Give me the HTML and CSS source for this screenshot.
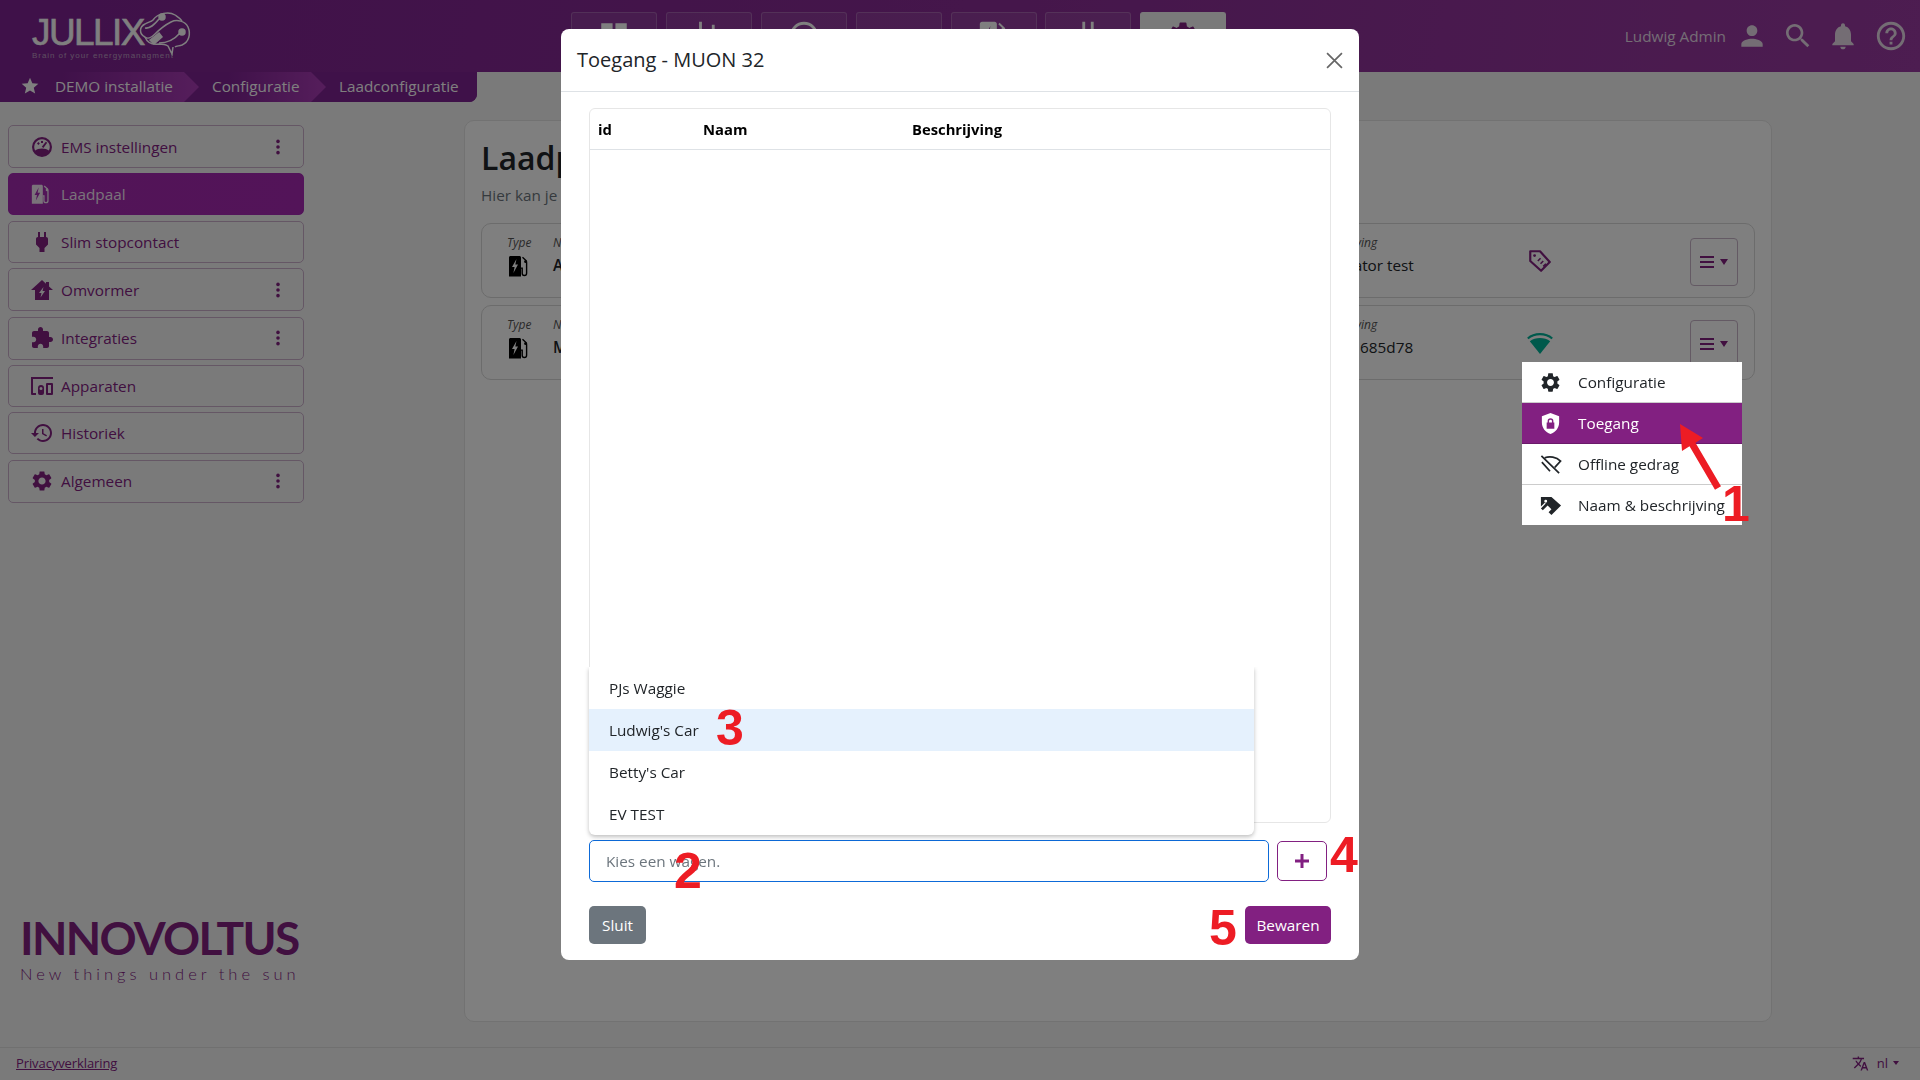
FILE: index.html
```html
<!DOCTYPE html>
<html lang="nl">
<head>
<meta charset="utf-8">
<title>Toegang - MUON 32</title>
<link rel="stylesheet" href="styles.css">
</head>
<body>
<svg class="sprite" aria-hidden="true">
  <symbol id="i-gear" viewBox="0 0 24 24"><path d="M19.14 12.94c.04-.3.06-.61.06-.94 0-.32-.02-.64-.07-.94l2.03-1.58c.18-.14.23-.41.12-.61l-1.92-3.32c-.12-.22-.37-.29-.59-.22l-2.39.96c-.5-.38-1.03-.7-1.62-.94l-.36-2.54c-.04-.24-.24-.41-.48-.41h-3.84c-.24 0-.43.17-.47.41l-.36 2.54c-.59.24-1.13.57-1.62.94l-2.39-.96c-.22-.08-.47 0-.59.22L2.74 8.87c-.12.21-.08.47.12.61l2.03 1.58c-.05.3-.09.63-.09.94s.02.64.07.94l-2.03 1.58c-.18.14-.23.41-.12.61l1.92 3.32c.12.22.37.29.59.22l2.39-.96c.5.38 1.03.7 1.62.94l.36 2.54c.05.24.24.41.48.41h3.84c.24 0 .44-.17.47-.41l.36-2.54c.59-.24 1.13-.56 1.62-.94l2.39.96c.22.08.47 0 .59-.22l1.92-3.32c.12-.22.07-.47-.12-.61l-2.01-1.58zM12 15.6c-1.98 0-3.6-1.62-3.6-3.6s1.62-3.6 3.6-3.6 3.6 1.62 3.6 3.6-1.62 3.6-3.6 3.6z"/></symbol>
  <symbol id="i-ev" viewBox="0 0 24 24"><path fill-rule="evenodd" d="M2 3.5C2 2.7 2.7 2 3.5 2h9c.8 0 1.5.7 1.5 1.500v19H2zM9.500 5 5 13h2.600l-1.200 6L11 10.600H8.300z"/><path d="M15.500 3.200 19 6.500l.6 2.200v10.600a2.200 2.200 0 0 1-4.400 0v-5.200h-1.200" fill="none" stroke="currentColor" stroke-width="1.400"/><circle cx="18.600" cy="7.600" r="1.500"/></symbol>
  <symbol id="i-vert" viewBox="0 0 24 24"><circle cx="12" cy="4.500" r="2.400"/><circle cx="12" cy="12" r="2.400"/><circle cx="12" cy="19.500" r="2.400"/></symbol>
  <symbol id="i-burger" viewBox="0 0 28 14"><path d="M0 1h14v2H0zM0 6h14v2H0zM0 11h14v2H0zM20 4h8l-4 6z"/></symbol>
</svg>

<div class="app">
  <header class="topbar">
    <div class="brand">
      <div class="brand-words">
        <span class="brand-name">JULLIX</span>
        <span class="brand-tag">Brain of your energymanagment</span>
      </div>
      <svg class="brand-mark outline" viewBox="0 0 55 47" stroke="currentColor" stroke-width="1.500">
        <path d="M8 27C2 24 2 17 8 14c3-2 6-2 8-4 5-7 16-9 22-5 3 2 5 3 7 6"/>
        <path d="M8 27c2 2 6 1 10-3 5-5 8-8 16-12 6-3 14-1 17 5 3 7 1 15-6 18-3 1-6 1-7 2"/>
        <path d="M8 18c5 1 9-3 14-9"/>
        <path d="M22 33c7 0 15-3 21-10"/>
        <path d="M8 27c2 5 7 8 14 7 3 0 6 0 9 2l4 8 1-7"/>
        <circle cx="25" cy="7" r="3" fill="currentColor"/>
        <circle cx="45" cy="22" r="3" fill="currentColor"/>
        <path d="m13 30 9-7 3 4-8 7z" fill="currentColor"/>
      </svg>
    </div>
    <nav class="tabs">
      <a class="tab"><svg viewBox="0 0 24 24"><path d="M3 3h8v10H3zM13 3h8v6h-8zM13 11h8v10h-8zM3 15h8v6H3z"/></svg></a>
      <a class="tab"><svg viewBox="0 0 24 24"><path d="M5 2h2v20H5zM14 4h2v18h-2z"/></svg></a>
      <a class="tab"><svg viewBox="0 0 24 24"><path d="M12 2a10 10 0 1 0 0 20 10 10 0 0 0 0-20zm0 2a8 8 0 1 1 0 16 8 8 0 0 1 0-16z"/></svg></a>
      <a class="tab"><svg viewBox="0 0 24 24"><path d="M3 8h18v3H3z"/></svg></a>
      <a class="tab"><svg viewBox="0 0 24 24"><use href="#i-ev"/></svg></a>
      <a class="tab"><svg viewBox="0 0 24 24"><path d="M8 2h2v8H8zM14 2h2v8h-2z"/></svg></a>
      <a class="tab tab-active"><svg viewBox="0 0 24 24"><use href="#i-gear"/></svg></a>
    </nav>
    <div class="user">
      <span class="user-name">Ludwig Admin</span>
      <svg class="u-person" viewBox="0 0 24 24"><path d="M12 12c2.210 0 4-1.790 4-4s-1.790-4-4-4-4 1.790-4 4 1.790 4 4 4zm0 2c-2.670 0-8 1.340-8 4v2h16v-2c0-2.660-5.330-4-8-4z"/></svg>
      <svg class="u-search" viewBox="0 0 24 24"><path d="M15.500 14h-.79l-.28-.27C15.410 12.590 16 11.110 16 9.500 16 5.910 13.090 3 9.500 3S3 5.910 3 9.500 5.910 16 9.500 16c1.610 0 3.090-.59 4.230-1.570l.27.280v.79l5 4.990L20.490 19l-4.990-5zm-6 0C7.010 14 5 11.990 5 9.500S7.010 5 9.500 5 14 7.010 14 9.500 11.990 14 9.500 14z"/></svg>
      <svg class="u-bell" viewBox="0 0 24 24"><path d="M12 22c1.100 0 2-.9 2-2h-4c0 1.100.9 2 2 2zm6-6v-5c0-3.070-1.630-5.640-4.500-6.320V4c0-.83-.67-1.500-1.500-1.500s-1.500.67-1.500 1.500v.68C7.640 5.360 6 7.920 6 11v5l-2 2v1h16v-1l-2-2z"/></svg>
      <svg class="u-help" viewBox="0 0 24 24"><path d="M11 18h2v-2h-2v2zm1-16C6.480 2 2 6.480 2 12s4.480 10 10 10 10-4.480 10-10S17.520 2 12 2zm0 18c-4.410 0-8-3.590-8-8s3.590-8 8-8 8 3.590 8 8-3.590 8-8 8zm0-14c-2.210 0-4 1.790-4 4h2c0-1.100.9-2 2-2s2 .9 2 2c0 2-3 1.750-3 5h2c0-2.250 3-2.500 3-5 0-2.210-1.790-4-4-4z"/></svg>
    </div>
  </header>

  <div class="crumbs">
    <a class="crumb crumb-first">
      <svg viewBox="0 0 24 24"><path d="M12 17.270L18.180 21l-1.640-7.030L22 9.240l-7.190-.61L12 2 9.190 8.630 2 9.240l5.460 4.730L5.820 21z"/></svg>
      DEMO installatie
    </a>
    <a class="crumb crumb-mid">Configuratie</a>
    <a class="crumb crumb-last">Laadconfiguratie</a>
  </div>

  <div class="content">
    <aside class="sidebar">
      <ul class="side-list">
        <li class="side-item tall">
          <svg class="side-icon" viewBox="0 0 24 24"><path fill-rule="evenodd" d="M12 2a10 10 0 1 0 0 20 10 10 0 0 0 0-20zm0 2.200a7.800 7.800 0 0 1 6.900 11.400c-1.600-1.200-4-2-6.900-2s-5.300.8-6.900 2A7.800 7.800 0 0 1 12 4.200zM11 6h2v2h-2zM7 8.500 8.400 7.100 9.800 8.500 8.400 9.900zM15.800 6.800l1.400 1-3.800 5.200-1.600-1.200z"/></svg>
          <span class="side-label">EMS instellingen</span>
          <svg class="side-more" viewBox="0 0 24 24"><use href="#i-vert"/></svg>
        </li>
        <li class="side-item side-active">
          <svg class="side-icon ev" viewBox="0 0 24 24"><use href="#i-ev"/></svg>
          <span class="side-label">Laadpaal</span>
        </li>
        <li class="side-item">
          <svg class="side-icon" viewBox="0 0 24 24"><path d="M16 7V2h-2v5h-4V2H8v5c-1.200 0-2 .8-2 2v5.500L9.500 18v4h5v-4l3.500-3.500V9c0-1.200-.8-2-2-2z"/></svg>
          <span class="side-label">Slim stopcontact</span>
        </li>
        <li class="side-item tall">
          <svg class="side-icon" viewBox="0 0 24 24"><path fill-rule="evenodd" d="M12 2 1 12h4v10h14V12h4l-4-3.600V4h-3v1.700zM13.500 9 9 15h2.500l-1 4.500L15 13h-2.500z"/></svg>
          <span class="side-label">Omvormer</span>
          <svg class="side-more" viewBox="0 0 24 24"><use href="#i-vert"/></svg>
        </li>
        <li class="side-item tall">
          <svg class="side-icon" viewBox="0 0 24 24"><path d="M20.500 11H19V7c0-1.100-.9-2-2-2h-4V3.500C13 2.120 11.880 1 10.500 1S8 2.120 8 3.500V5H4c-1.100 0-1.990.9-1.990 2v3.800H3.500c1.490 0 2.700 1.210 2.700 2.700s-1.210 2.700-2.700 2.700H2V20c0 1.100.9 2 2 2h3.800v-1.500c0-1.490 1.210-2.700 2.700-2.700 1.490 0 2.700 1.210 2.700 2.700V22H17c1.100 0 2-.9 2-2v-4h1.500c1.380 0 2.500-1.120 2.500-2.500S21.880 11 20.500 11z"/></svg>
          <span class="side-label">Integraties</span>
          <svg class="side-more" viewBox="0 0 24 24"><use href="#i-vert"/></svg>
        </li>
        <li class="side-item">
          <svg class="side-icon" viewBox="0 0 24 24"><path fill-rule="evenodd" d="M1 3h22v2H3v14h3v2H2a1 1 0 0 1-1-1zM17 9h5a1 1 0 0 1 1 1v10a1 1 0 0 1-1 1h-5a1 1 0 0 1-1-1V10a1 1 0 0 1 1-1zm1 2v8h3v-8zM11 11a3 3 0 0 1 3 3v5a2 2 0 0 1-2 2h-2a2 2 0 0 1-2-2v-5a3 3 0 0 1 3-3zm0 2a1.500 1.500 0 1 0 0 3 1.500 1.500 0 0 0 0-3z"/></svg>
          <span class="side-label">Apparaten</span>
        </li>
        <li class="side-item">
          <svg class="side-icon" viewBox="0 0 24 24"><path d="M13 3c-4.970 0-9 4.030-9 9H1l3.890 3.890.07.14L9 12H6c0-3.870 3.130-7 7-7s7 3.130 7 7-3.130 7-7 7c-1.930 0-3.680-.79-4.940-2.060l-1.420 1.420C8.270 19.990 10.510 21 13 21c4.970 0 9-4.030 9-9s-4.030-9-9-9zm-1 5v5l4.280 2.540.72-1.210-3.500-2.080V8H12z"/></svg>
          <span class="side-label">Historiek</span>
        </li>
        <li class="side-item tall">
          <svg class="side-icon" viewBox="0 0 24 24"><use href="#i-gear"/></svg>
          <span class="side-label">Algemeen</span>
          <svg class="side-more" viewBox="0 0 24 24"><use href="#i-vert"/></svg>
        </li>
      </ul>
      <div class="partner">
        <div class="partner-name">INNOVOLTUS</div>
        <div class="partner-sub">New things under the sun</div>
      </div>
    </aside>

    <main class="panel">
      <h1 class="panel-title">Laadpalen</h1>
      <p class="panel-sub">Hier kan je de laadpalen configureren.</p>
      <div class="charger">
        <div class="cell"><span class="cell-label">Type</span><svg class="cell-ev" viewBox="0 0 24 24"><use href="#i-ev"/></svg></div>
        <div class="cell"><span class="cell-label">Naam</span><span class="cell-name">Alfen Eve</span></div>
        <div class="cell"><span class="cell-label">Beschrijving</span><span class="cell-value">Simulator test</span></div>
        <svg class="status-tag outline" viewBox="0 0 24 24" stroke="currentColor" stroke-width="2"><path d="M3 3h9l9 10-8 8-10-9z" stroke-linejoin="round"/><circle cx="7" cy="7" r="1.300" fill="currentColor" stroke="none"/><path d="m10 12 2.500-2.500M12.500 14.500 15 12M15 17l2.500-2.500" stroke-width="1.500"/></svg>
        <button class="menu-btn"><svg viewBox="0 0 28 14"><use href="#i-burger"/></svg></button>
      </div>
      <div class="charger">
        <div class="cell"><span class="cell-label">Type</span><svg class="cell-ev" viewBox="0 0 24 24"><use href="#i-ev"/></svg></div>
        <div class="cell"><span class="cell-label">Naam</span><span class="cell-name">MUON 32</span></div>
        <div class="cell"><span class="cell-label">Beschrijving</span><span class="cell-value">a13c0 685d78</span></div>
        <svg class="status-wifi" viewBox="0 0 26 22"><path d="M13 22 2.800 9.200C8.500 5 17.500 5 23.200 9.200z"/><path class="outline" d="M.8 6.500C7.500 .7 18.500 .7 25.200 6.500" stroke="currentColor" stroke-width="2.200"/></svg>
        <button class="menu-btn"><svg viewBox="0 0 28 14"><use href="#i-burger"/></svg></button>
      </div>
    </main>
  </div>

  <footer class="foot">
    <a class="foot-link">Privacyverklaring</a>
    <div class="lang">
      <svg viewBox="0 0 24 24"><path d="M12.870 15.070l-2.540-2.510.03-.03c1.740-1.940 2.980-4.170 3.710-6.530H17V4h-7V2H8v2H1v1.990h11.170C11.500 7.920 10.440 9.750 9 11.350 8.070 10.320 7.300 9.190 6.690 8h-2c.73 1.630 1.730 3.170 2.980 4.560l-5.090 5.020L4 19l5-5 3.110 3.110.76-2.040zM18.500 10h-2L12 22h2l1.120-3h4.750L21 22h2l-4.500-12zm-2.620 7l1.620-4.330L19.120 17h-3.240z"/></svg>
      <span>nl</span>
      <i class="lang-caret"></i>
    </div>
  </footer>
</div>

<div class="backdrop"></div>

<section class="modal">
  <div class="modal-head">
    <h2 class="modal-title">Toegang - MUON 32</h2>
    <svg class="modal-close outline" viewBox="0 0 16 16"><path d="M1 1l14 14M15 1 1 15" stroke="currentColor" stroke-width="1.600"/></svg>
  </div>
  <div class="modal-body">
    <div class="table-box">
      <div class="table-head">
        <span class="col-id">id</span>
        <span class="col-name">Naam</span>
        <span class="col-desc">Beschrijving</span>
      </div>
    </div>
    <ul class="options">
      <li class="option">PJs Waggie</li>
      <li class="option option-hover">Ludwig's Car</li>
      <li class="option">Betty's Car</li>
      <li class="option">EV TEST</li>
    </ul>
    <div class="pick-row">
      <input class="pick-input" placeholder="Kies een wagen.">
      <button class="plus-btn"><svg viewBox="0 0 16 16"><path d="M6.500 1h3v5.500H15v3H9.500V15h-3V9.500H1v-3h5.500z"/></svg></button>
    </div>
    <div class="modal-foot">
      <button class="btn btn-grey">Sluit</button>
      <button class="btn btn-purple">Bewaren</button>
    </div>
  </div>
</section>

<ul class="ctx-menu">
  <li class="ctx-item">
    <svg viewBox="0 0 24 24"><use href="#i-gear"/></svg>Configuratie
  </li>
  <li class="ctx-item ctx-active">
    <svg viewBox="0 0 24 24"><path fill-rule="evenodd" d="M12 1 3 4.500V11c0 5.500 3.800 10.500 9 12 5.200-1.500 9-6.500 9-12V4.500zM12 6.500a3 3 0 0 1 3 3V11h1v6.500H8V11h1V9.500a3 3 0 0 1 3-3zm0 1.500a1.500 1.500 0 0 0-1.500 1.500V11h3V9.500A1.500 1.500 0 0 0 12 8z"/></svg>Toegang
  </li>
  <li class="ctx-item">
    <svg class="outline" viewBox="0 0 24 24" stroke="currentColor" stroke-width="1.800"><path d="M2.500 3 21 21M6 5C11 3 18 4 22.500 8.500L16.500 15M3 9.500 11.500 19"/></svg>Offline gedrag
  </li>
  <li class="ctx-item">
    <svg viewBox="0 0 24 24"><path fill-rule="evenodd" d="M2 3h11l10 9-10 10-3-3 3-3-4-4-5 5-2-2 5-5-1-1-4 4zM7 6a1.500 1.500 0 1 0 0 3 1.500 1.500 0 0 0 0-3z"/></svg>Naam &amp; beschrijving
  </li>
</ul>

<svg class="pointer" viewBox="0 0 60 80"><path d="M0 0 23 14 15.500 18.700 41 62.200 35 65.800 9.500 22.300 2 27z" fill="#ed1c24"/></svg>
<span class="mark mark-1">1</span>
<span class="mark mark-2">2</span>
<span class="mark mark-3">3</span>
<span class="mark mark-4">4</span>
<span class="mark mark-5">5</span>
</body>
</html>
```

FILE: styles.css
```css
* { box-sizing: border-box; }
html, body { margin: 0; height: 100%; overflow: hidden; }
body {
  font-family: "Open Sans", "Noto Sans", sans-serif;
  font-size: 15.300px;
  color: #212529;
  background: #f5f5f5;
}
ul { list-style: none; margin: 0; padding: 0; }
svg { fill: currentColor; display: block; }
svg.outline, path.outline { fill: none; }
.sprite { position: absolute; width: 0; height: 0; }

.app { height: 1080px; display: flex; flex-direction: column; }

/* top bar */
.topbar {
  height: 72px;
  display: flex;
  background: linear-gradient(100deg, #7e2292 0%, #8a2c96 50%, #9a3aa2 100%);
  color: #fff;
  position: relative;
}
.brand { width: 571px; padding: 10px 0 0 32px; display: flex; align-items: flex-start; }
.brand-words { display: flex; flex-direction: column; width: 105px; }
.brand-name {
  font-family: "Liberation Sans", sans-serif;
  font-size: 37px;
  line-height: 36px;
  letter-spacing: -1.600px;
  margin-top: 5px;
  color: #fff;
  -webkit-text-stroke: .6px #fff;
}
.brand-tag {
  font-family: "Liberation Sans", sans-serif;
  font-size: 8px;
  line-height: 10px;
  letter-spacing: .95px;
  white-space: nowrap;
  color: #ddd;
  opacity: .65;
}
.brand-mark { width: 55px; height: 47px; color: #fff; }
.tabs { display: flex; gap: 8.900px; padding-top: 12px; align-items: flex-start; }
.tab {
  width: 86px;
  height: 60px;
  border: 1px solid rgba(255, 255, 255, .2);
  border-bottom: 0;
  border-radius: 3px 3px 0 0;
  background: rgba(255, 255, 255, .08);
  display: flex;
  justify-content: center;
  padding-top: 6px;
}
.tab svg { width: 34px; height: 34px; }
.tab-active { background: #f5f5f5; color: #822081; border-color: #f5f5f5; }
.user {
  margin-left: auto;
  display: flex;
  align-items: center;
  padding-right: 12px;
  color: #e8dbe9;
  height: 72px;
}
.user-name { margin-right: 10px; }
.u-person { width: 32px; height: 32px; margin-right: 14px; }
.u-search { width: 32px; height: 32px; margin-right: 13px; }
.u-bell { width: 32px; height: 32px; margin-right: 15px; }
.u-help { width: 34px; height: 34px; }

/* breadcrumbs */
.crumbs {
  height: 30px;
  width: 477px;
  display: flex;
  background: #7e2292;
  color: #fff;
  border-radius: 0 0 8px 0;
  overflow: hidden;
}
.crumb {
  height: 30px;
  display: flex;
  align-items: center;
  padding-bottom: 2px;
  white-space: nowrap;
  position: relative;
  clip-path: polygon(0 0, calc(100% - 15px) 0, 100% 50%, calc(100% - 15px) 100%, 0 100%);
  background: linear-gradient(90deg, #7e2292 30%, #ac3cb8 100%);
}
.crumb svg { width: 20px; height: 20px; margin-right: 15px; }
.crumb-first { width: 199px; padding-left: 20px; z-index: 3; }
.crumb-mid { width: 142px; padding-left: 28px; margin-left: -15px; z-index: 2; }
.crumb-last {
  flex: 1;
  padding-left: 28px;
  margin-left: -15px;
  clip-path: none;
  background: #7e2292;
}

/* body */
.content { flex: 1; display: flex; min-height: 0; padding-left: 8px; }
.sidebar {
  width: 296px;
  padding-top: 23px;
  padding-bottom: 62px;
  display: flex;
  flex-direction: column;
}
.side-list { display: flex; flex-direction: column; gap: 5.400px; }
.side-item {
  height: 42px;
  display: flex;
  align-items: center;
  padding-left: 21px;
  border: 1px solid #caaecb;
  border-radius: 5px;
  color: #822081;
}
.side-item.tall { height: 43px; }
.side-active {
  background: linear-gradient(95deg, #a52ab0, #a628b2);
  border-color: #a428b4;
  color: #f4e6f5;
}
.side-icon { width: 24px; height: 24px; margin-right: 7px; flex: none; }
.side-icon.ev { width: 22px; height: 22px; margin-right: 9px; }
.side-label { flex: 1; }
.side-more { width: 18px; height: 18px; margin-right: 16px; }
.partner { margin-top: auto; padding-left: 12px; color: #822081; }
.partner-name {
  font-family: Lato, sans-serif;
  font-size: 46px;
  line-height: 46px;
  font-weight: 700;
  letter-spacing: -1.700px;
  white-space: nowrap;
}
.partner-sub {
  font-family: Lato, sans-serif;
  font-size: 16.500px;
  line-height: 22px;
  font-weight: 300;
  letter-spacing: 4px;
  white-space: nowrap;
  margin-top: 2px;
}

.panel {
  width: 1308px;
  height: 902px;
  margin: 18px 0 0 160px;
  padding: 19px 16px 0;
  background: #fff;
  border: 1px solid #e4e4e4;
  border-radius: 10px;
}
.panel-title { margin: 0; font-size: 32px; line-height: 36px; font-weight: 600; color: #212529; }
.panel-sub { margin: 8px 0 17px; line-height: 22px; color: #6c757d; }
.charger {
  height: 75px;
  margin-bottom: 7px;
  padding: 11px 16px 0 25px;
  border: 1px solid #d8d8d8;
  border-radius: 10px;
  display: grid;
  grid-template-columns: 46px 761px 213px 1fr 48px;
  align-items: start;
}
.cell { display: flex; flex-direction: column; }
.cell-label { font-size: 12px; line-height: 15px; font-style: italic; color: #555; }
.cell-ev { width: 24px; height: 24px; margin: 4px 0 0 0; color: #000; }
.cell-name { font-weight: 600; line-height: 28px; margin-top: 1px; white-space: nowrap; }
.cell-value { line-height: 28px; margin-top: 1px; color: #212529; }
.status-tag { width: 26px; height: 26px; color: #822081; margin-top: 13px; }
.status-wifi { width: 26px; height: 22px; color: #00b398; margin-top: 15px; }
.menu-btn {
  width: 48px;
  height: 48px;
  padding: 0;
  margin-top: 3px;
  background: transparent;
  border: 1px solid #c8b4c9;
  border-radius: 4px;
  color: #822081;
  display: flex;
  align-items: center;
  justify-content: center;
}
.menu-btn svg { width: 28px; height: 14px; }

.foot {
  height: 33px;
  border-top: 1px solid #e0e0e0;
  display: flex;
  align-items: center;
  justify-content: space-between;
  padding: 0 21px 2px 16px;
  color: #822081;
}
.foot-link { font-size: 13px; text-decoration: underline; letter-spacing: -.1px; }
.lang { display: flex; align-items: center; font-size: 13px; }
.lang svg { width: 17px; height: 17px; margin-right: 8px; }
.lang-caret {
  margin-left: 5px;
  border-left: 3.500px solid transparent;
  border-right: 3.500px solid transparent;
  border-top: 4px solid currentColor;
}

/* overlay layer */
.backdrop { position: fixed; inset: 0; background: rgba(0, 0, 0, .5); z-index: 10; }

.modal {
  position: fixed;
  left: 561px;
  top: 29px;
  width: 798px;
  height: 931px;
  background: #fff;
  border-radius: 8px;
  z-index: 20;
  display: flex;
  flex-direction: column;
}
.modal-head {
  height: 63px;
  flex: none;
  border-bottom: 1px solid #dee2e6;
  display: flex;
  align-items: center;
  justify-content: space-between;
  padding: 0 16px;
}
.modal-title { margin: 0; font-size: 20px; font-weight: 500; line-height: 1; color: #212529; }
.modal-close { width: 17px; height: 17px; color: #666; }
.modal-body { flex: 1; position: relative; padding: 16px 28px 15px; display: flex; flex-direction: column; }
.table-box {
  height: 715px;
  border: 1px solid #e6e6e6;
  border-radius: 6px;
}
.table-head {
  height: 41px;
  border-bottom: 1px solid #dee2e6;
  display: flex;
  align-items: center;
  font-weight: 700;
  font-size: 14.800px;
  color: #000;
}
.col-id { width: 113px; padding-left: 8px; }
.col-name { width: 209px; }
.options {
  position: absolute;
  left: 28px;
  top: 575px;
  width: 665px;
  background: #fff;
  border-radius: 0 0 6px 6px;
  box-shadow: 0 2px 4px rgba(0, 0, 0, .25);
  clip-path: inset(0 -6px -8px -6px);
}
.option { height: 42px; padding-left: 20px; display: flex; align-items: center; }
.option-hover { background: #e5f1fd; }
.pick-row { display: flex; gap: 8px; margin-top: 17px; padding-right: 4px; align-items: center; }
.pick-input {
  flex: 1;
  height: 42px;
  padding: 0 16px;
  font: inherit;
  border: 1px solid #0d6ad8;
  border-radius: 5px;
  outline: none;
  color: #212529;
}
.pick-input::placeholder { color: #6c757d; opacity: 1; }
.plus-btn {
  width: 50px;
  height: 40px;
  background: #fff;
  border: 1px solid #822081;
  border-radius: 5px;
  color: #822081;
  display: flex;
  align-items: center;
  justify-content: center;
  padding: 0;
}
.plus-btn svg { width: 16px; height: 16px; }
.modal-foot { display: flex; justify-content: space-between; margin-top: 24px; }
.btn {
  height: 38px;
  border: 0;
  border-radius: 5px;
  color: #fff;
  font: inherit;
  padding: 0;
}
.btn-grey { width: 57px; background: #6c757d; }
.btn-purple { width: 86px; background: #822081; }

/* context menu */
.ctx-menu {
  position: fixed;
  left: 1522px;
  top: 362px;
  width: 220px;
  background: #fff;
  z-index: 20;
}
.ctx-item {
  height: 41px;
  display: flex;
  align-items: center;
  padding-left: 17px;
  border-bottom: 1px solid #ccc;
  white-space: nowrap;
  color: #212529;
}
.ctx-item:last-child { border-bottom: 0; height: 40px; }
.ctx-item svg { width: 23px; height: 23px; margin-right: 16px; flex: none; }
.ctx-active { background: #822081; color: #fff; border-bottom-color: #6a1a6a; }

/* annotations */
.pointer { position: fixed; left: 1680px; top: 424px; width: 60px; height: 80px; z-index: 30; }
.mark {
  position: fixed;
  z-index: 30;
  font-family: "Liberation Sans", sans-serif;
  font-weight: 700;
  font-size: 50px;
  line-height: 50px;
  color: #ed1c24;
}
.mark-1 { left: 1722px; top: 479px; }
.mark-2 { left: 674px; top: 846px; }
.mark-3 { left: 716px; top: 703px; }
.mark-4 { left: 1330px; top: 830px; }
.mark-5 { left: 1209px; top: 903px; }
```
